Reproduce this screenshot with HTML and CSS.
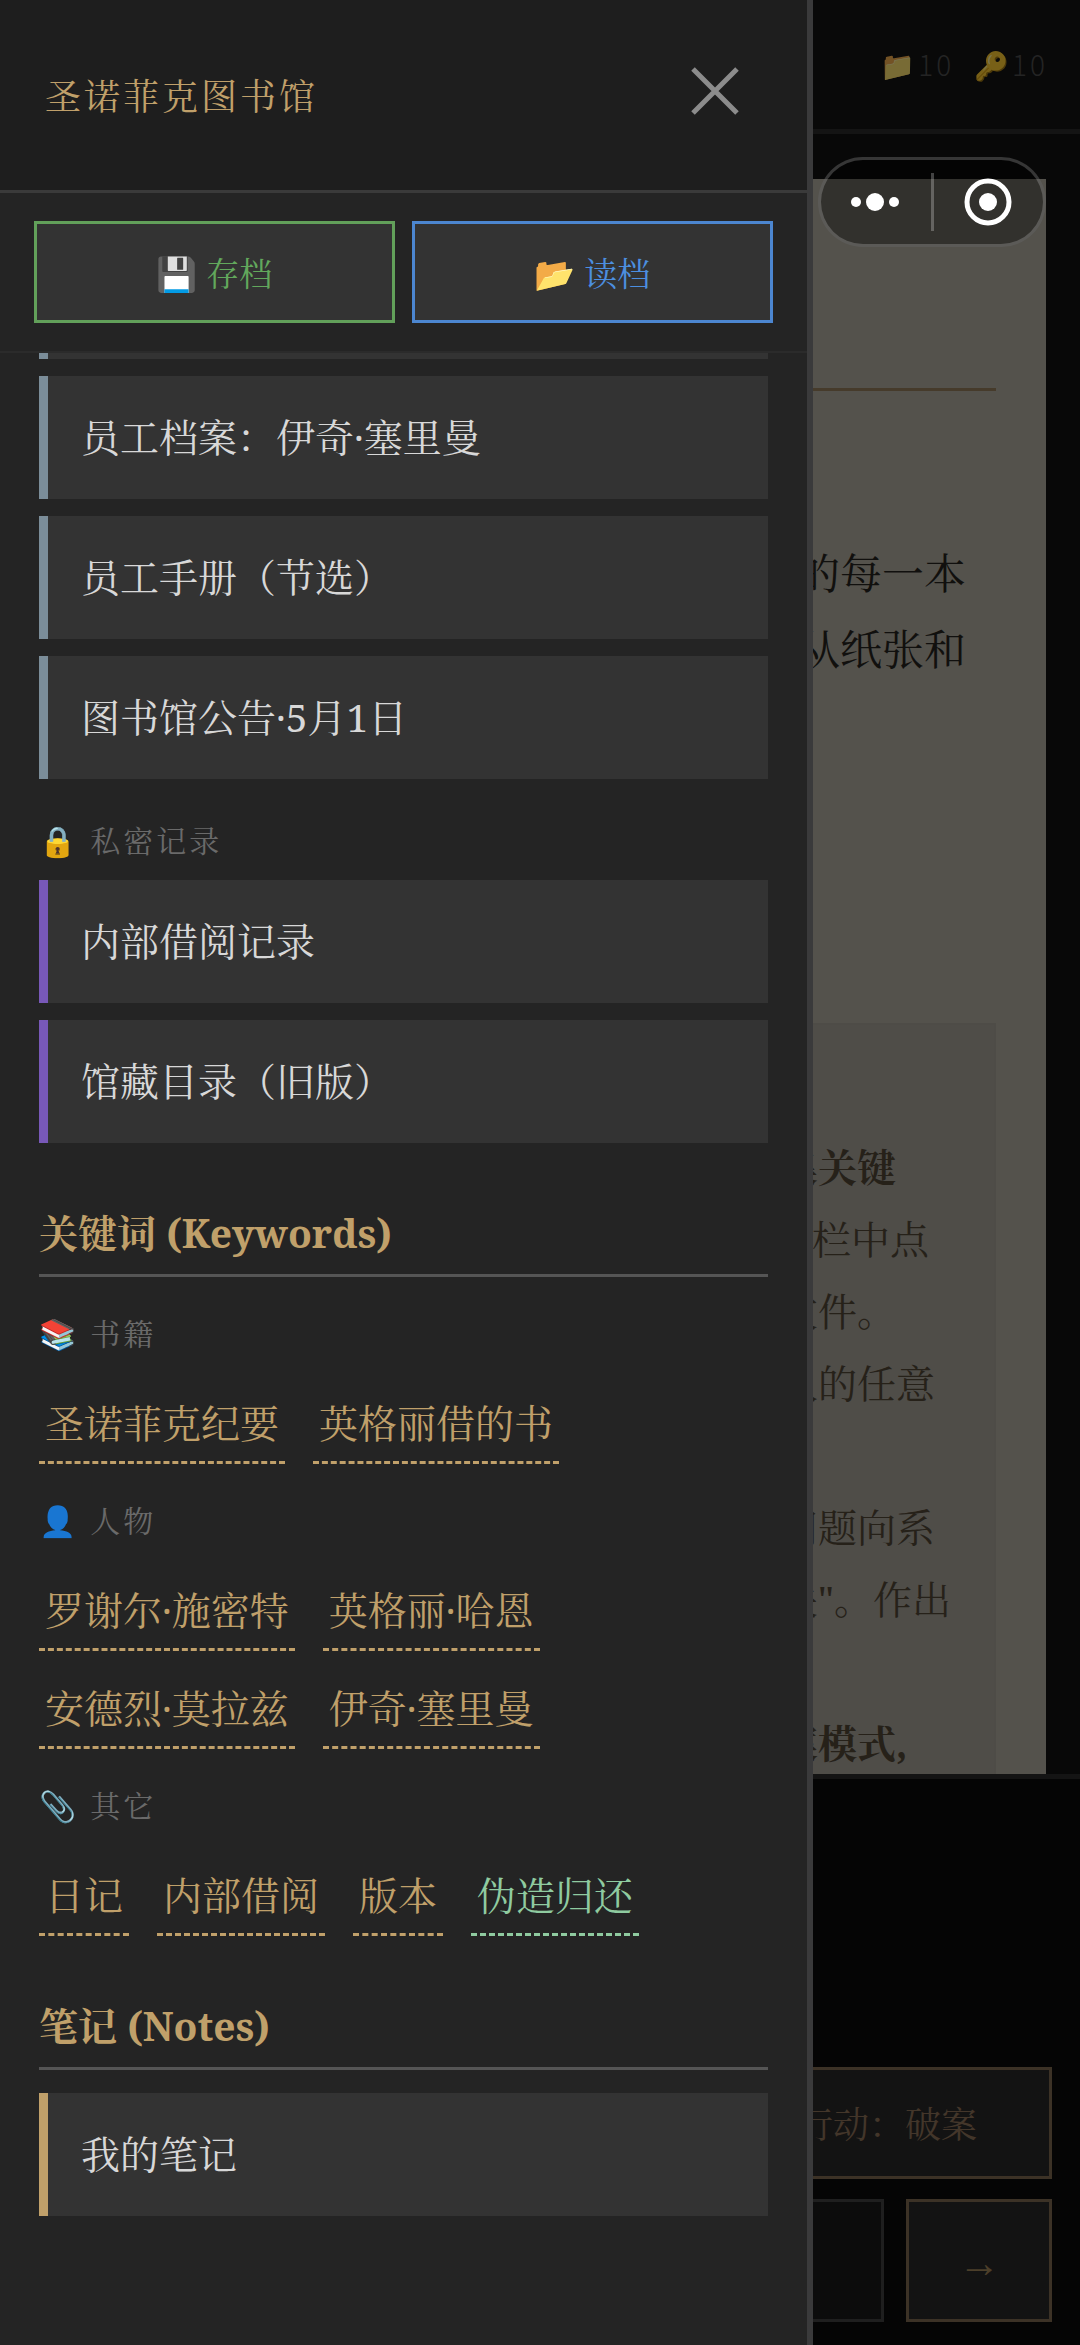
FILE: index.html
```html
<!DOCTYPE html>
<html lang="zh-CN">
<head>
<meta charset="utf-8">
<meta name="viewport" content="width=device-width, initial-scale=1">
<title>圣诺菲克图书馆</title>
<link rel="stylesheet" href="styles.css">
</head>
<body>
<div class="app">
  <header class="topbar">
    <span class="stat"><span class="stat-icon">📁</span>10</span>
    <span class="stat"><span class="stat-icon">🔑</span>10</span>
  </header>
  <main class="desk">
    <article class="paper">
      <hr class="paper-rule">
      <p class="paper-text">的每一本<br>从纸张和</p>
      <div class="guide">
        <div class="guide-lines">
          <p><strong>集关键</strong></p>
          <p class="indent">栏中点</p>
          <p>文件。</p>
          <p>人的任意</p>
          <p class="skip">问题向系</p>
          <p>关"。作出</p>
          <p class="skip"><strong>案模式,</strong></p>
        </div>
      </div>
    </article>
  </main>
  <footer class="console">
    <button class="action" type="button">行动：破案</button>
    <form class="ask">
      <input class="ask-input" type="text" aria-label="提问">
      <button class="ask-send" type="button">→</button>
    </form>
  </footer>
</div>

<div class="capsule">
  <button type="button" aria-label="更多">
    <svg width="50" height="20" viewBox="0 0 50 20" fill="#fff"><circle cx="5" cy="10" r="5"/><circle cx="24" cy="10" r="9"/><circle cx="43" cy="10" r="5"/></svg>
  </button>
  <button type="button" aria-label="关闭小程序">
    <svg width="48" height="48" viewBox="0 0 48 48"><circle cx="24" cy="24" r="21" fill="none" stroke="#fff" stroke-width="5"/><circle cx="24" cy="24" r="9" fill="#fff"/></svg>
  </button>
</div>

<aside class="drawer">
  <header class="drawer-head">
    <h1>圣诺菲克图书馆</h1>
    <button class="close" type="button" aria-label="关闭">
      <svg width="48" height="48" viewBox="0 0 48 48"><path d="M2 2L46 46M46 2L2 46" stroke="#8c8c8c" stroke-width="5" fill="none"/></svg>
    </button>
  </header>
  <div class="saves">
    <button class="save" type="button">💾 存档</button>
    <button class="load" type="button">📂 读档</button>
  </div>
  <div class="drawer-body">
    <ul class="files files-staff">
      <li><button class="file" type="button">&nbsp;</button></li>
      <li><button class="file" type="button">员工档案：伊奇·塞里曼</button></li>
      <li><button class="file" type="button">员工手册（节选）</button></li>
      <li><button class="file" type="button">图书馆公告·5月1日</button></li>
    </ul>
    <h3 class="label label-files">🔒 私密记录</h3>
    <ul class="files files-private">
      <li><button class="file" type="button">内部借阅记录</button></li>
      <li><button class="file" type="button">馆藏目录（旧版）</button></li>
    </ul>

    <h2>关键词 (Keywords)</h2>
    <h3 class="label">📚 书籍</h3>
    <div class="chips">
      <button class="chip" type="button">圣诺菲克纪要</button>
      <button class="chip" type="button">英格丽借的书</button>
    </div>
    <h3 class="label">👤 人物</h3>
    <div class="chips">
      <button class="chip" type="button">罗谢尔·施密特</button>
      <button class="chip" type="button">英格丽·哈恩</button>
      <button class="chip" type="button">安德烈·莫拉兹</button>
      <button class="chip" type="button">伊奇·塞里曼</button>
    </div>
    <h3 class="label">📎 其它</h3>
    <div class="chips">
      <button class="chip" type="button">日记</button>
      <button class="chip" type="button">内部借阅</button>
      <button class="chip" type="button">版本</button>
      <button class="chip chip-new" type="button">伪造归还</button>
    </div>

    <h2>笔记 (Notes)</h2>
    <ul class="files files-notes">
      <li><button class="file" type="button">我的笔记</button></li>
    </ul>
  </div>
</aside>
</body>
</html>
```
FILE: styles.css
```css
* { box-sizing: border-box; }

body {
  margin: 0;
  background: #080808;
  font-family: "Noto Serif", "Noto Serif CJK SC", "Liberation Serif", "Noto Sans CJK SC", "Noto Color Emoji", serif;
}

h1, h2, h3, p, ul { margin: 0; padding: 0; }
ul { list-style: none; }

button, input {
  margin: 0;
  padding: 0;
  border: 0;
  border-radius: 0;
  background: none;
  color: inherit;
  font: inherit;
}

/* Reading desk behind the drawer */
.app {
  display: flex;
  flex-direction: column;
  height: 100vh;
  overflow: hidden;
}

.topbar {
  display: flex;
  flex: none;
  justify-content: flex-end;
  align-items: center;
  gap: 20px;
  height: 134px;
  padding: 0 32px 2px 0;
  border-bottom: 5px solid #141414;
  background: #090909;
  color: #242424;
  font: 300 28px/40px "Noto Sans CJK SC", "Noto Color Emoji", sans-serif;
  letter-spacing: 3px;
}

.stat { display: flex; align-items: center; }
.stat-icon { opacity: 0.45; }

.desk {
  flex: 1;
  min-height: 0;
  padding: 45px 34px 0;
  overflow: hidden;
}

.paper {
  height: 100%;
  padding: 209px 50px 0;
  overflow: hidden;
  background: #54524c;
}

.paper-rule {
  height: 3px;
  margin: 0 0 144px;
  border: 0;
  background: #463b2b;
}

.paper-text {
  width: max-content;
  margin: 0 30px 336px auto;
  color: #11100e;
  font-size: 42px;
  line-height: 76px;
}

.guide {
  padding: 106px 43px 106px 0;
  border: 2px solid #4e4c47;
  background: #4f4d48;
}

.guide-lines {
  width: max-content;
  margin-left: auto;
  color: #262119;
  font-size: 39px;
  line-height: 72px;
}

.indent { padding-left: 33px; }
.skip { margin-top: 72px; }

.console {
  display: flex;
  flex: none;
  flex-direction: column;
  gap: 20px;
  padding: 288px 28px 23px;
  border-top: 5px solid #141414;
  background: #050505;
  color: #43362a;
}

.action {
  height: 112px;
  padding-right: 72px;
  border: 3px solid #3c3226;
  background: #131313;
  font-size: 36px;
  text-align: right;
}

.ask { display: flex; gap: 22px; height: 123px; }

.ask-input {
  flex: 1;
  min-width: 0;
  border: 3px solid #1f1f1f;
  background: #0c0c0c;
}

.ask-send {
  width: 146px;
  padding-top: 4px;
  border: 3px solid #3c3226;
  background: #131313;
  color: #4c3f2a;
  font-family: "Liberation Sans", sans-serif;
  font-size: 42px;
}

/* Host app capsule menu */
.capsule {
  position: absolute;
  top: 157px;
  right: 34px;
  display: flex;
  align-items: center;
  width: 228px;
  height: 90px;
  border: 3px solid rgba(255, 255, 255, 0.2);
  border-radius: 45px;
  background: rgba(0, 0, 0, 0.4);
}

.capsule button {
  display: flex;
  flex: 1;
  align-items: center;
  justify-content: center;
  height: 58px;
}

.capsule button + button { border-left: 3px solid rgba(255, 255, 255, 0.25); }

/* Side drawer */
.drawer {
  position: fixed;
  top: 0;
  bottom: 0;
  left: 0;
  display: flex;
  flex-direction: column;
  width: calc(75% + 3px);
  border-right: 6px solid #3a3a3b;
  background: #242424;
}

.drawer-head {
  display: flex;
  flex: none;
  align-items: center;
  justify-content: space-between;
  height: 193px;
  padding: 0 68px 8px 45px;
  border-bottom: 3px solid #3a3a3a;
  background: #1e1e1e;
}

.drawer-head h1 {
  padding-top: 8px;
  color: #c0a06a;
  font-size: 36px;
  font-weight: 400;
  letter-spacing: 3px;
}

.close { display: flex; }

.saves {
  display: flex;
  flex: none;
  gap: 17px;
  padding: 28px 34px;
  border-bottom: 2px solid #2b2b2b;
}

.saves button {
  flex: 1;
  height: 102px;
  border: 3px solid;
  background: #333;
  font-size: 33px;
}

.saves .save { border-color: #62a05a; color: #62a85c; }
.saves .load { border-color: #4c86d0; color: #4c8fe0; }

.drawer-body {
  display: flex;
  flex: 1;
  flex-direction: column;
  justify-content: flex-end;
  min-height: 0;
  padding: 0 39px 129px;
  overflow: hidden;
}

.drawer-body > * { flex: none; }

.files {
  display: flex;
  flex-direction: column;
  gap: 17px;
}

.file {
  width: 100%;
  height: 123px;
  padding: 0 33px 6px;
  border-left: 9px solid;
  background: #333;
  font-size: 39px;
  text-align: left;
  color: #d8d8d8;
}

.files-staff .file { border-left-color: #7b8d99; }
.files-private .file { border-left-color: #7858b8; }
.files-notes .file { border-left-color: #c0a06a; }

.drawer-body h2 {
  margin: 60px 0 0;
  padding-bottom: 12px;
  border-bottom: 3px solid #555;
  color: #c0a06a;
  font-size: 39px;
  font-weight: 700;
  line-height: 59px;
}

.files-notes { margin-top: 23px; }

.label {
  margin: 33px 0 37px;
  color: #6a6a6a;
  font-size: 30px;
  font-weight: 400;
  line-height: 47px;
  height: 47px;
  padding-bottom: 2px;
  letter-spacing: 3px;
}

.label-files { margin: 38px 0 16px; }

.chips {
  display: flex;
  flex-wrap: wrap;
  gap: 28px;
  padding-right: 120px;
}

.chip {
  height: 70px;
  padding: 0 6px 10px;
  border-bottom: 3px dashed #c0a06a;
  color: #c0a06a;
  font-size: 39px;
  line-height: 57px;
}

.chip-new { border-bottom-color: #8fcba0; color: #8fcba0; }
```
